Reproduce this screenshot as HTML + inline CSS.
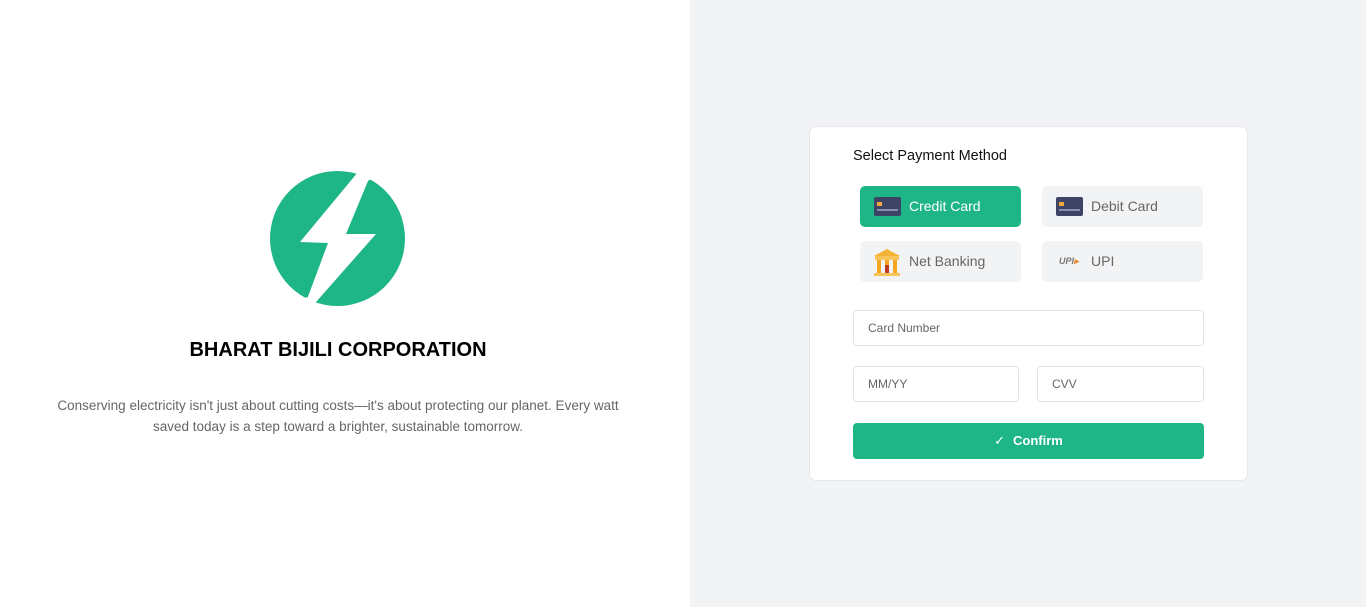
<!DOCTYPE html>
<html><head><meta charset="utf-8"><style>
*{box-sizing:border-box;margin:0;padding:0}
body{width:1366px;height:607px;font-family:"Liberation Sans",sans-serif;position:relative;overflow:hidden;background:#fff}
.right{position:absolute;left:690px;top:0;width:676px;height:607px;background:#f2f3f5}
.abs{position:absolute}
h1{position:absolute;left:0;width:676px;top:339px;text-align:center;font-size:20px;font-weight:bold;color:#000}
.desc{position:absolute;left:52px;width:572px;top:395px;text-align:center;font-size:13.5px;line-height:21px;color:#666}
.card{position:absolute;left:809px;top:126px;width:439px;height:355px;background:#fff;border:1px solid #e5e7eb;border-radius:7px}
.title{position:absolute;left:853px;top:148px;font-size:14.5px;color:#111}
.opt{position:absolute;width:161px;height:41px;border-radius:5px;background:#f2f3f5;color:#666;font-size:14px;line-height:41px;padding-left:49px}
.opt.sel{background:#1eb587;color:#fff}
.ic{position:absolute;left:14px;top:11px}
.inp{position:absolute;border:1px solid #e3e4e6;border-radius:4px;background:#fff;font-size:12px;color:#666;padding-left:14px;line-height:34px;height:36px}
.btn{position:absolute;left:853px;top:423px;width:351px;height:36px;background:#1eb587;border-radius:4px;color:#fff;font-weight:bold;font-size:13px;text-align:center;line-height:36px}
</style></head><body>
<svg class="abs" style="left:268px;top:168px" width="140" height="142" viewBox="268 168 140 142">
<circle cx="337.5" cy="238.5" r="67.5" fill="#1eb587"/>
<polygon points="300,242 358,172 366,172 368,181 346,234 376,234 316,302 306,302 328,243" fill="#fff"/>
<polygon points="358,170 366,170 372,178 368,181" fill="#fff"/>
<polygon points="306,297 316,302 312,310 300,308" fill="#fff"/>
</svg>
<h1>BHARAT BIJILI CORPORATION</h1>
<div class="desc">Conserving electricity isn't just about cutting costs—it's about protecting our planet. Every watt saved today is a step toward a brighter, sustainable tomorrow.</div>
<div class="right"></div>
<div class="card"></div>
<div class="title">Select Payment Method</div>
<div class="opt sel" style="left:860px;top:186px"><svg class="ic" style="top:11px" width="27" height="19"><rect width="27" height="19" rx="2" fill="#3d4466"/><rect x="3" y="5" width="5" height="4" fill="#f2a93b"/><rect x="3" y="12" width="21" height="2" fill="#8890b0"/></svg>Credit Card</div>
<div class="opt" style="left:1042px;top:186px"><svg class="ic" style="top:11px" width="27" height="19"><rect width="27" height="19" rx="2" fill="#3d4466"/><rect x="3" y="5" width="5" height="4" fill="#f2a93b"/><rect x="3" y="12" width="21" height="2" fill="#8890b0"/></svg>Debit Card</div>
<div class="opt" style="left:860px;top:241px"><svg class="ic" style="top:8px" width="26" height="27"><polygon points="13,0 26,7 0,7" fill="#f5b335"/><rect x="1" y="7" width="24" height="4" fill="#f7c45a"/><rect x="3" y="11" width="4" height="13" fill="#f5a623"/><rect x="11" y="11" width="4" height="13" fill="#f5a623"/><rect x="19" y="11" width="4" height="13" fill="#f5a623"/><rect x="11" y="16" width="4" height="8" fill="#c0392b"/><rect x="0" y="24" width="26" height="3" fill="#f7c45a"/></svg>Net Banking</div>
<div class="opt" style="left:1042px;top:241px"><span class="ic" style="top:0;font-size:9px;font-style:italic;font-weight:bold;color:#777;left:17px">UPI<span style="color:#f08a24">▸</span></span>UPI</div>
<div class="inp" style="left:853px;top:310px;width:351px">Card Number</div>
<div class="inp" style="left:853px;top:366px;width:166px">MM/YY</div>
<div class="inp" style="left:1037px;top:366px;width:167px">CVV</div>
<div class="btn"><span style="font-weight:normal;margin-right:8px">✓</span>Confirm</div>
</body></html>
